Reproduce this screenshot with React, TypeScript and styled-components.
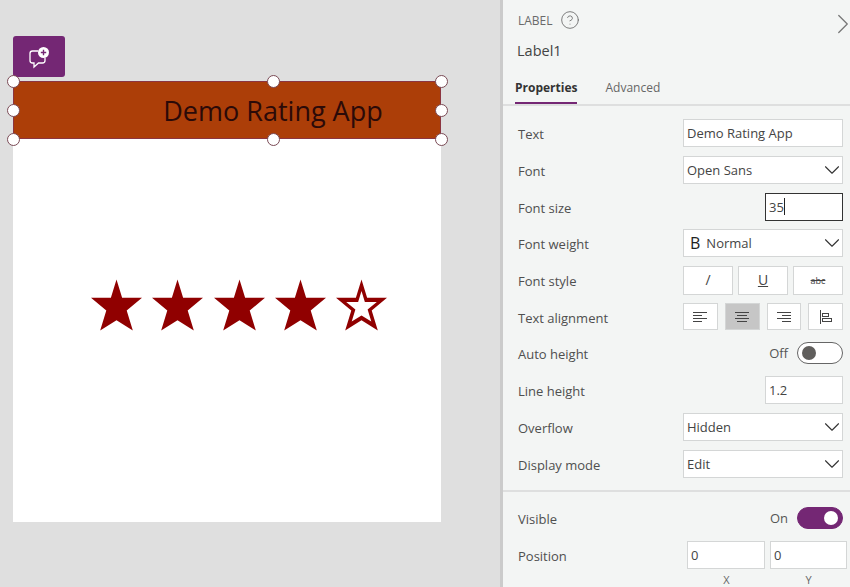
import React, { ReactElement } from "react";
import styled, { createGlobalStyle } from "styled-components";
import { ChevronDown, ChevronRight, CircleHelp } from "lucide-react";

const GlobalStyle = createGlobalStyle`
  html, body {
    margin: 0;
    padding: 0;
    width: 850px;
    height: 587px;
    overflow: hidden;
    font-family: "Open Sans", "Liberation Sans", sans-serif;
  }
`;

const Page = styled.div`
  display: flex;
  width: 850px;
  height: 587px;
  overflow: hidden;
`;

const Canvas = styled.div`
  width: 500px;
  flex: none;
  background: #dfdfdf;
  padding: 36px 0 0 13px;
  box-sizing: border-box;
`;

const ChatButton = styled.div`
  width: 52px;
  height: 41px;
  border-radius: 3px;
  background: #742774;
  display: flex;
  align-items: center;
  justify-content: center;
  margin-bottom: 4px;
`;

const Screen = styled.div`
  width: 428px;
  height: 441px;
  background: #fff;
  display: flex;
  flex-direction: column;
`;

const Banner = styled.div`
  position: relative;
  height: 58px;
  flex: none;
  background: #ac3e08;
  box-shadow: inset 0 0 0 1px #8c3540;
  color: #2b0a08;
  font-size: 27px;
  line-height: 60px;
  text-align: center;
  padding-left: 92px;
  box-sizing: border-box;
  white-space: nowrap;
`;

const Handle = styled.span<{ $x: number; $y: number }>`
  position: absolute;
  left: ${p => p.$x}px;
  top: ${p => p.$y}px;
  width: 11px;
  height: 11px;
  margin: -6px 0 0 -6px;
  border-radius: 50%;
  background: #fff;
  border: 1px solid #7a4a55;
`;

const StarRow = styled.div`
  display: flex;
  gap: 10.3px;
  padding: 140px 0 0 78px;
`;

const Panel = styled.aside`
  flex: 1;
  min-width: 0;
  background: #f3f5f4;
  border-left: 3px solid #cbcbcb;
  color: #444;
`;

const Head = styled.header`
  position: relative;
  height: 106px;
  border-bottom: 2px solid #dedfdf;
  box-sizing: border-box;
  padding: 10px 0 0 15px;
`;

const KindLine = styled.div`
  display: flex;
  align-items: center;
  gap: 7px;
  font-size: 12px;
  height: 20px;
  color: #6a6a6a;
`;

const Collapse = styled.span`
  position: absolute;
  right: -10px;
  top: 7px;
  display: flex;
  color: #777;
`;

const ControlName = styled.div`
  font-size: 14.5px;
  line-height: 20px;
  margin: 11px 0 0 -1px;
  color: #444;
`;

const Tabs = styled.div`
  display: flex;
  gap: 28px;
  margin: 17px 0 0 -3px;
`;

const Tab = styled.div<{ $active?: boolean }>`
  font-size: 12px;
  line-height: 20px;
  height: 24px;
  font-weight: ${p => (p.$active ? 700 : 400)};
  color: ${p => (p.$active ? "#333" : "#666")};
  border-bottom: ${p => (p.$active ? "2px solid #742774" : "none")};
`;

const Section = styled.section<{ $top: number }>`
  padding: ${p => p.$top}px 0 0 15px;
`;

const Row = styled.div`
  display: flex;
  align-items: center;
  justify-content: space-between;
  height: 36.7px;
  padding-right: 7px;
  font-size: 13px;
`;

const RowLabel = styled.span`
  color: #4f4f4f;
  padding-top: 2px;
`;

const Field = styled.div<{ $w?: number; $focus?: boolean }>`
  width: ${p => p.$w ?? 160}px;
  height: 28px;
  box-sizing: border-box;
  flex: none;
  background: #fff;
  border: 1px solid ${p => (p.$focus ? "#333" : "#d4d6d6")};
  padding: 0 3px;
  display: flex;
  align-items: center;
  justify-content: space-between;
  font-size: 13px;
  color: #444;
  & > svg {
    margin-right: -6px;
  }
`;

const Caret = styled.span`
  display: inline-block;
  width: 1px;
  height: 17px;
  background: #222;
`;

const FieldValue = styled.span`
  display: flex;
  align-items: center;
`;

const WeightGlyph = styled.b`
  font-weight: 400;
  font-size: 16px;
  line-height: 1;
  color: #222;
  margin: 0 6px 0 3px;
`;

const ButtonGroup = styled.div<{ $gap: number }>`
  display: flex;
  gap: ${p => p.$gap}px;
  width: 160px;
  flex: none;
`;

const ToolButton = styled.div<{ $active?: boolean; $h: number }>`
  flex: 1;
  height: ${p => p.$h}px;
  box-sizing: border-box;
  background: ${p => (p.$active ? "#c6c6c6" : "#fff")};
  border: 1px solid #d4d6d6;
  display: flex;
  align-items: center;
  justify-content: center;
  color: #444;
`;

const StyleGlyph = styled.span<{ $underline?: boolean; $strike?: boolean }>`
  font-size: ${p => (p.$strike ? "9px" : "14px")};
  line-height: 1;
  color: #444;
  text-decoration: ${p =>
    p.$underline ? "underline" : p.$strike ? "line-through" : "none"};
`;

const ToggleLine = styled.div`
  display: flex;
  align-items: center;
  gap: 9px;
  color: #555;
  font-size: 13px;
`;

const Toggle = styled.div<{ $on?: boolean }>`
  width: 46px;
  height: 22px;
  box-sizing: border-box;
  border-radius: 11px;
  padding: 0 4px;
  display: flex;
  align-items: center;
  justify-content: ${p => (p.$on ? "flex-end" : "flex-start")};
  background: ${p => (p.$on ? "#742774" : "#fff")};
  border: 1px solid ${p => (p.$on ? "#742774" : "#666")};
  &::after {
    content: "";
    width: 14px;
    height: 14px;
    border-radius: 50%;
    background: ${p => (p.$on ? "#fff" : "#605e5c")};
  }
`;

const Divider = styled.hr`
  border: 0;
  height: 2px;
  background: #dedfdf;
  margin: 8px 0 0;
`;

const PositionFields = styled.div`
  display: flex;
  gap: 5px;
  margin-right: -4px;
`;

const Axis = styled.div`
  display: flex;
  gap: 5px;
  justify-content: flex-end;
  margin: 0 3px 0 0;
  font-size: 11px;
  line-height: 14px;
  color: #666;
  & > span {
    width: 77px;
    text-align: center;
  }
`;

const STAR = "25,0 30.5,18 50,18 35,30.500 41,50 25,40 9,50 15,30.500 0,18 19.500,18";

const Star = ({ empty }: { empty?: boolean }): ReactElement => (
  <svg width="51" height="52" viewBox="0 0 50 50">
    <polygon points={STAR} fill="#900000" />
    {empty && (
      <polygon
        points={STAR}
        fill="#fff"
        transform="translate(25 28) scale(0.6) translate(-25 -28)"
      />
    )}
  </svg>
);

const ChatPlus = (): ReactElement => (
  <svg width="24" height="24" viewBox="0 0 24 24" fill="none">
    <path
      d="M11 6H5.500A2.500 2.500 0 0 0 3 8.500v7A2.500 2.500 0 0 0 5.500 18H7v4l4.500-4h4a2.500 2.500 0 0 0 2.500-2.500V13"
      stroke="#fff"
      strokeWidth="1.3"
    />
    <circle cx="16.500" cy="7.500" r="5.500" fill="#fff" />
    <path d="M16.500 4.800v5.400M13.800 7.500h5.400" stroke="#742774" strokeWidth="1.400" />
  </svg>
);

const AlignIcon = ({ lines }: { lines: [number, number][] }): ReactElement => (
  <svg width="14" height="12" viewBox="0 0 14 12" stroke="#444" strokeWidth="1">
    {lines.map(([a, b], i) => (
      <line key={i} x1={a} x2={b} y1={1.500 + i * 3} y2={1.500 + i * 3} />
    ))}
  </svg>
);

const TopAlignIcon = (): ReactElement => (
  <svg width="14" height="14" viewBox="0 0 14 14" fill="none" stroke="#444" strokeWidth="1">
    <line x1="1.500" y1="0" x2="1.500" y2="14" />
    <rect x="3.500" y="3.500" width="6" height="3" />
    <rect x="3.500" y="8.500" width="9" height="3" />
  </svg>
);

const Select = ({ children }: { children: React.ReactNode }): ReactElement => (
  <Field>
    <FieldValue>{children}</FieldValue>
    <ChevronDown size={26} strokeWidth={1} color="#333" />
  </Field>
);

const handles: [number, number][] = [
  [0, 0], [260, 0], [428, 0],
  [0, 29], [428, 29],
  [0, 58], [260, 58], [428, 58]
];

const App = (): ReactElement => (
  <Page>
    <GlobalStyle />
    <Canvas>
      <ChatButton>
        <ChatPlus />
      </ChatButton>
      <Screen>
        <Banner>
          Demo Rating App
          {handles.map(([x, y]) => (
            <Handle key={`${x}-${y}`} $x={x} $y={y} />
          ))}
        </Banner>
        <StarRow>
          <Star />
          <Star />
          <Star />
          <Star />
          <Star empty />
        </StarRow>
      </Screen>
    </Canvas>
    <Panel>
      <Head>
        <KindLine>
          LABEL
          <CircleHelp size={20} strokeWidth={1} color="#666" />
        </KindLine>
        <Collapse>
          <ChevronRight size={34} strokeWidth={0.9} />
        </Collapse>
        <ControlName>Label1</ControlName>
        <Tabs>
          <Tab $active>Properties</Tab>
          <Tab>Advanced</Tab>
        </Tabs>
      </Head>
      <Section $top={9}>
        <Row>
          <RowLabel>Text</RowLabel>
          <Field>Demo Rating App</Field>
        </Row>
        <Row>
          <RowLabel>Font</RowLabel>
          <Select>Open Sans</Select>
        </Row>
        <Row>
          <RowLabel>Font size</RowLabel>
          <Field $w={78} $focus>
            <FieldValue>
              35
              <Caret />
            </FieldValue>
          </Field>
        </Row>
        <Row>
          <RowLabel>Font weight</RowLabel>
          <Select>
            <WeightGlyph>B</WeightGlyph>
            Normal
          </Select>
        </Row>
        <Row>
          <RowLabel>Font style</RowLabel>
          <ButtonGroup $gap={5}>
            <ToolButton $h={29}>
              <StyleGlyph>/</StyleGlyph>
            </ToolButton>
            <ToolButton $h={29}>
              <StyleGlyph $underline>U</StyleGlyph>
            </ToolButton>
            <ToolButton $h={29}>
              <StyleGlyph $strike>abc</StyleGlyph>
            </ToolButton>
          </ButtonGroup>
        </Row>
        <Row>
          <RowLabel>Text alignment</RowLabel>
          <ButtonGroup $gap={7}>
            <ToolButton $h={27}>
              <AlignIcon lines={[[0, 14], [0, 9], [0, 14], [0, 9]]} />
            </ToolButton>
            <ToolButton $h={27} $active>
              <AlignIcon lines={[[0, 14], [2, 12], [0, 14], [2, 12]]} />
            </ToolButton>
            <ToolButton $h={27}>
              <AlignIcon lines={[[0, 14], [5, 14], [0, 14], [5, 14]]} />
            </ToolButton>
            <ToolButton $h={27}>
              <TopAlignIcon />
            </ToolButton>
          </ButtonGroup>
        </Row>
        <Row>
          <RowLabel>Auto height</RowLabel>
          <ToggleLine>
            Off
            <Toggle />
          </ToggleLine>
        </Row>
        <Row>
          <RowLabel>Line height</RowLabel>
          <Field $w={78}>1.2</Field>
        </Row>
        <Row>
          <RowLabel>Overflow</RowLabel>
          <Select>Hidden</Select>
        </Row>
        <Row>
          <RowLabel>Display mode</RowLabel>
          <Select>Edit</Select>
        </Row>
      </Section>
      <Divider />
      <Section $top={8}>
        <Row>
          <RowLabel>Visible</RowLabel>
          <ToggleLine>
            On
            <Toggle $on />
          </ToggleLine>
        </Row>
        <Row>
          <RowLabel>Position</RowLabel>
          <PositionFields>
            <Field $w={78}>0</Field>
            <Field $w={77}>0</Field>
          </PositionFields>
        </Row>
        <Axis>
          <span>X</span>
          <span>Y</span>
        </Axis>
      </Section>
    </Panel>
  </Page>
);

export default App;
